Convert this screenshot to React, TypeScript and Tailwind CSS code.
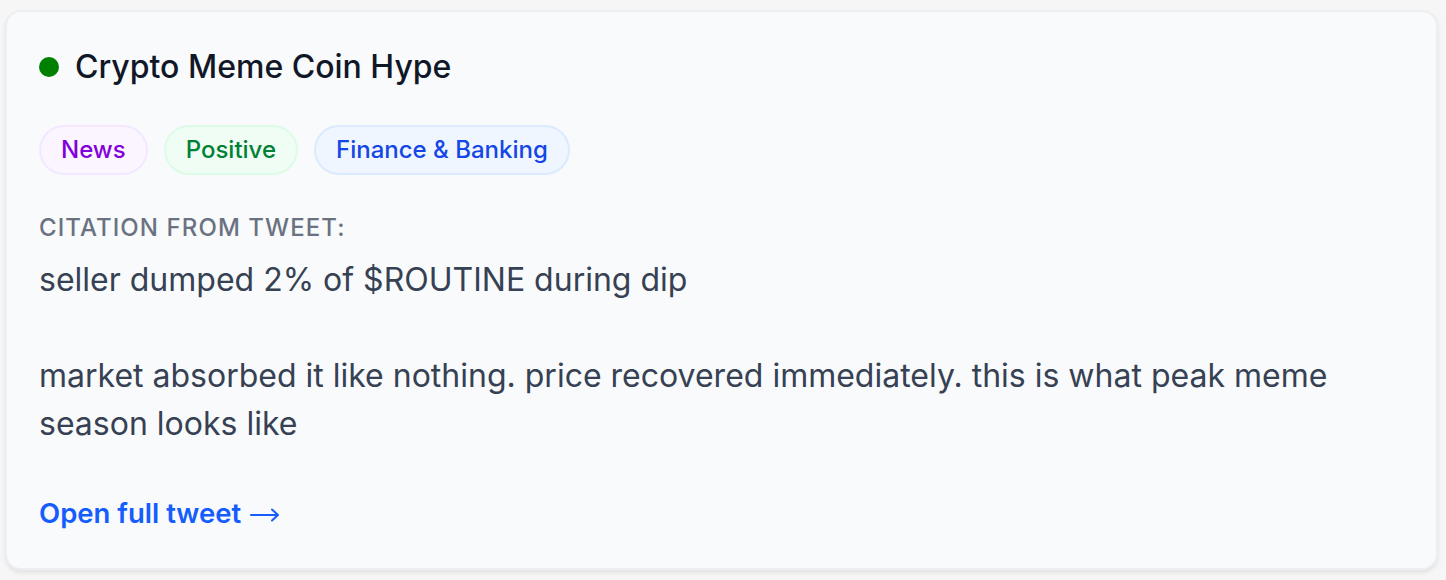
import React from 'react';

const tags = [
  { label: 'News', className: 'bg-[#faf5ff] border-[#f3e8ff] text-[#8200db]' },
  { label: 'Positive', className: 'bg-[#f0fdf4] border-[#dcfce7] text-[#008236]' },
  { label: 'Finance & Banking', className: 'bg-[#eff6ff] border-[#dbeafe] text-[#1447e6]' },
];

const citation = 'seller dumped 2% of $ROUTINE during dip\n\nmarket absorbed it like nothing. price recovered immediately. this is what peak meme season looks like';

export default function App() {
  return (
    <div className="min-h-screen bg-[#f6f6f7] pt-[10px] pl-[5px] pr-[8px] font-['Inter',sans-serif]">
      <div className="rounded-2xl border-2 border-[#eceef1] bg-[#f9fafb] p-8 pr-[100px] pb-[33px] shadow-[0_3px_4px_rgba(0,0,0,0.08)]">
        {/* Title */}
        <div className="flex items-center gap-4">
          <span className="w-5 h-5 rounded-full bg-[#008000]" />
          <h2 className="text-[32px] leading-[46px] font-medium text-[#101828]">Crypto Meme Coin Hype</h2>
        </div>

        {/* Tags */}
        <div className="flex gap-4 mt-[35px]">
          {tags.map(tag => (
            <span
              key={tag.label}
              className={`rounded-full border-2 px-5 py-[5px] text-[24px] leading-[36px] font-medium ${tag.className}`}
            >
              {tag.label}
            </span>
          ))}
        </div>

        {/* Citation */}
        <div className="mt-[36px]">
          <p className="text-[24px] leading-[33px] font-medium tracking-[0.045em] uppercase text-[#6a7282]">Citation from tweet:</p>
          <p className="mt-3 text-[32px] leading-[48px] text-[#364153] whitespace-pre-wrap">{citation}</p>
        </div>

        {/* Link */}
        <a href="#" className="mt-[43px] flex items-center gap-[9px] text-[27.5px] leading-[44px] font-semibold text-[#155dfc]">
          Open full tweet
          <svg width="30" height="14" viewBox="0 0 30 14" fill="none" stroke="currentColor" strokeWidth="2" strokeLinecap="round" strokeLinejoin="round" className="mt-[3px]">
            <path d="M1 7h27M22 1.5L28 7l-6 5.5" />
          </svg>
        </a>
      </div>
    </div>
  );
}
